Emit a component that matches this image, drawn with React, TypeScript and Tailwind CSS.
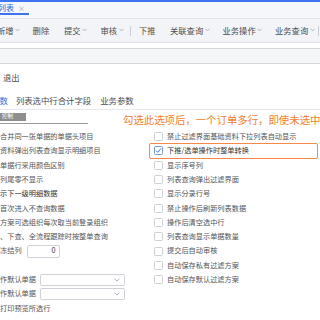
import type { ReactNode } from "react";

const Chevron = () => (
  <svg width="5" height="4" viewBox="0 0 5 4" className="ml-[1.5px] shrink-0">
    <polyline points="0.5,0.8 2.5,2.8 4.5,0.8" fill="none" stroke="#9aa0a8" strokeWidth="0.8" />
  </svg>
);

function ToolItem({ label, drop, className }: { label: string; drop?: boolean; className: string }) {
  return (
    <div className={`flex shrink-0 items-center ${className}`}>
      <span>{label}</span>
      {drop ? <Chevron /> : null}
    </div>
  );
}

function Check({ checked }: { checked?: boolean }) {
  return (
    <span
      className={`flex h-[9px] w-[9px] shrink-0 items-center justify-center rounded-[1.5px] border bg-white ${
        checked ? "border-[#7c9ad6]" : "border-[#cdd1d7]"
      }`}
    >
      {checked ? (
        <svg width="7" height="7" viewBox="0 0 7 7">
          <polyline points="1,3.6 2.8,5.4 6,1.4" fill="none" stroke="#3d6ddb" strokeWidth="0.9" />
        </svg>
      ) : null}
    </span>
  );
}

function Row({ children, className = "" }: { children?: ReactNode; className?: string }) {
  return <div className={`flex h-[14.3px] items-center whitespace-nowrap ${className}`}>{children}</div>;
}

function SelectBox() {
  return (
    <div className="ml-auto mr-[29px] flex h-[12px] w-[85px] items-center justify-end rounded-[2px] border border-[#cfd3d9] bg-white pr-[4px]">
      <svg width="6" height="4" viewBox="0 0 6 4">
        <polyline points="0.6,0.8 3,3 5.4,0.8" fill="none" stroke="#9aa0a8" strokeWidth="0.8" />
      </svg>
    </div>
  );
}

const leftRows = [
  "合并同一张单据的单据头项目",
  "资料弹出列表查询显示明细项目",
  "单据行采用颜色区别",
  "列尾零不显示",
  "示下一级明细数据",
  "首次进入不查询数据",
  "方案可选组织每次取当前登录组织",
  "、下查、全流程跟踪时按整单查询",
];

const rightRows = [
  "禁止过滤界面基础资料下拉列表自动显示",
  "下推/选单操作时整单转换",
  "显示序号列",
  "列表查询弹出过滤界面",
  "显示分录行号",
  "禁止操作后刷新列表数据",
  "操作后清空选中行",
  "列表查询显示单据数量",
  "提交后自动审核",
  "自动保存私有过滤方案",
  "自动保存默认过滤方案",
];

export default function App() {
  return (
    <div className="h-[320px] w-[320px] overflow-hidden bg-white font-['Noto_Sans_CJK_SC','Noto_Sans',sans-serif] text-[#555]">
      <div className="h-[2px] bg-[#3e72f0]" />

      <div className="flex h-[17px] items-start border-b border-[#e2e5ea] bg-[#f6f7fa]">
        <div className="-ml-[2px] flex h-[13px] items-center border-b-2 border-[#3e72f0] pr-[4px] pt-[1px] text-[8px] leading-none text-[#2f66e0]">
          <span>列表</span>
          <span className="ml-[4px] text-[7px] text-[#8d939c]">×</span>
        </div>
      </div>

      <div className="flex h-[24px] items-center border-b border-[#dde0e6] bg-[#f2f4f8] text-[8.3px] leading-none text-[#4d4d4d]">
        <ToolItem label="新增" drop className="-ml-[3px]" />
        <ToolItem label="删除" className="ml-[12.5px]" />
        <ToolItem label="提交" drop className="ml-[14.8px]" />
        <ToolItem label="审核" drop className="ml-[13.4px]" />
        <div className="ml-[6.4px] h-[10px] w-px shrink-0 bg-[#c9cdd4]" />
        <ToolItem label="下推" className="ml-[8px]" />
        <ToolItem label="关联查询" drop className="ml-[14.4px]" />
        <ToolItem label="业务操作" drop className="ml-[12.8px]" />
        <ToolItem label="业务查询" drop className="ml-[12.8px]" />
        <div className="ml-[3.3px] h-[10px] w-px shrink-0 bg-[#c9cdd4]" />
      </div>

      <div className="h-[5px]" />
      <div className="h-[16px] border-y border-[#d3d6db] bg-[#f5f6f8]" />

      <div className="flex h-[27px] items-center pl-[3px] text-[8.3px] leading-none text-[#4d4d4d]">退出</div>

      <div className="flex h-[19px] items-center border-b border-[#e6e8eb] text-[8.4px] leading-none text-[#4d4d4d]">
        <span className="-ml-[0.5px] text-[#2f6bdf]">数</span>
        <span className="ml-[8px]">列表选中行合计字段</span>
        <span className="ml-[9px]">业务参数</span>
      </div>

      <div className="flex h-[19.5px] items-center">
        <div className="w-[88px] shrink-0 self-start border-b border-[#9c9c9c] pb-[2px] pt-[3px]">
          <div className="flex h-[8px] w-[26px] items-center bg-[#8e8e8e] pl-[2px] text-[5.5px] leading-none text-white">控制</div>
        </div>
        <span className="ml-[35px] whitespace-nowrap text-[10.4px] leading-none text-[#f07d2e]">
          勾选此选项后，一个订单多行，即使未选中
        </span>
      </div>

      <div className="flex text-[7.2px] leading-none">
        <div className="w-[154px] shrink-0">
          {leftRows.map((t, i) => (
            <Row key={t} className={i === 4 ? "text-[#333]" : ""}>
              {t}
            </Row>
          ))}
          <Row>
            <span>冻结列</span>
            <div className="ml-[5px] flex h-[13px] w-[33px] items-center justify-end rounded-[2px] border border-[#cfd3d9] pr-[3px] text-[#333]">
              0
            </div>
          </Row>
          <Row />
          <Row>
            <span>作默认单据</span>
            <SelectBox />
          </Row>
          <Row>
            <span>作默认单据</span>
            <SelectBox />
          </Row>
          <Row className="pt-[1px]">打印预览所选行</Row>
        </div>

        <div className="flex-1">
          {rightRows.map((t, i) => (
            <Row key={t} className="relative">
              {i === 1 ? (
                <div className="absolute -bottom-[1px] -left-[5px] -top-[1.3px] right-[2px] rounded-[2px] border-[1.5px] border-[#f4894a]" />
              ) : null}
              <Check checked={i === 1} />
              <span className={`ml-[4px] ${i === 1 ? "text-[#333]" : ""}`}>{t}</span>
            </Row>
          ))}
        </div>
      </div>
    </div>
  );
}
